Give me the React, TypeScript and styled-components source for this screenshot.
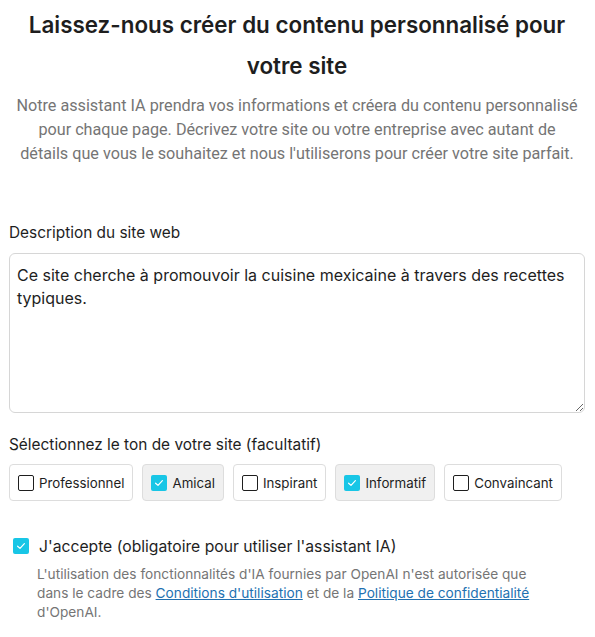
import React from "react";
import styled, { createGlobalStyle } from "styled-components";

const Global = createGlobalStyle`
  html, body { margin: 0; padding: 0; background: #fff; }
  body { font-family: Inter, "Noto Sans", sans-serif; color: #1e1e1e; }
  * { box-sizing: border-box; }
`;

const Page = styled.div`
  padding: 0 10px 0 9px;
  display: flex;
  flex-direction: column;
`;

const Title = styled.h1`
  margin: 4px 0 0;
  text-align: center;
  font-family: Inter, sans-serif;
  font-weight: 600;
  font-size: 22.4px;
  line-height: 41px;
  color: #1e1e1e;
`;

const Intro = styled.p`
  margin: 8px 0 0;
  padding: 0 6px;
  text-align: center;
  font-family: Roboto, sans-serif;
  font-size: 16.2px;
  line-height: 24px;
  color: #757575;
`;

const FieldLabel = styled.label<{ $top: number }>`
  display: block;
  font-family: Inter, sans-serif;
  font-size: 15.4px;
  line-height: 20px;
  color: #1e1e1e;
  margin-top: ${(p) => p.$top}px;
`;

const TextArea = styled.textarea`
  display: block;
  width: 100%;
  height: 160px;
  margin-top: 10px;
  padding: 10px 7px;
  border: 1px solid #d6d6d6;
  border-radius: 6px;
  font-family: Inter, sans-serif;
  font-size: 16px;
  line-height: 23px;
  color: #1e1e1e;
  resize: vertical;
  outline: none;
`;

const Chips = styled.div`
  display: flex;
  gap: 9px;
  margin-top: 9px;
`;

const Chip = styled.label<{ $on: boolean }>`
  display: flex;
  align-items: center;
  gap: 5px;
  height: 37px;
  padding: 0 8px;
  border: 1px solid #dddddd;
  border-radius: 4px;
  background: ${(p) => (p.$on ? "#f0f0f0" : "#fff")};
  font-family: Inter, sans-serif;
  font-size: 13.3px;
  color: #1e1e1e;
`;

const Box = styled.span<{ $on: boolean }>`
  width: 16px;
  height: 16px;
  flex: none;
  border-radius: 2px;
  border: ${(p) => (p.$on ? "none" : "1.5px solid #1e1e1e")};
  background: ${(p) => (p.$on ? "#18c6e6" : "#fff")};
  display: flex;
  align-items: center;
  justify-content: center;
`;

const Agree = styled.div`
  margin-top: 37px;
  display: grid;
  grid-template-columns: 16px 1fr;
  column-gap: 10px;
  padding-left: 4px;
`;

const AgreeLabel = styled.div`
  font-family: Inter, sans-serif;
  font-size: 15.7px;
  line-height: 18px;
  color: #1e1e1e;
  display: flex;
  align-items: center;
`;

const Help = styled.p`
  grid-column: 2;
  max-width: 515px;
  margin: 9px 0 0 -2px;
  font-family: Inter, sans-serif;
  font-size: 13.7px;
  line-height: 19px;
  color: #757575;
`;

const Link = styled.a`
  color: #2271b1;
  text-decoration: underline;
`;

const Check = ({ on }: { on: boolean }) => (
  <Box $on={on}>
    {on && (
      <svg width="12" height="12" viewBox="0 0 12 12" fill="none">
        <path d="M2.6 6.2 L5 8.4 L9.4 3.6" stroke="#fff" strokeWidth="1.2" strokeLinecap="round" strokeLinejoin="round" />
      </svg>
    )}
  </Box>
);

const tones: [string, boolean][] = [
  ["Professionnel", false],
  ["Amical", true],
  ["Inspirant", false],
  ["Informatif", true],
  ["Convaincant", false],
];

export default function App() {
  return (
    <Page>
      <Global />
      <Title>
        Laissez-nous créer du contenu personnalisé pour
        <br />
        votre site
      </Title>
      <Intro>
        Notre assistant IA prendra vos informations et créera du contenu personnalisé pour chaque page.
        Décrivez votre site ou votre entreprise avec autant de détails que vous le souhaitez et nous
        l'utiliserons pour créer votre site parfait.
      </Intro>
      <FieldLabel $top={57}>Description du site web</FieldLabel>
      <TextArea defaultValue="Ce site cherche à promouvoir la cuisine mexicaine à travers des recettes typiques." />
      <FieldLabel $top={22}>Sélectionnez le ton de votre site (facultatif)</FieldLabel>
      <Chips>
        {tones.map(([t, on]) => (
          <Chip key={t} $on={on}>
            <Check on={on} />
            {t}
          </Chip>
        ))}
      </Chips>
      <Agree>
        <Check on={true} />
        <AgreeLabel>J'accepte (obligatoire pour utiliser l'assistant IA)</AgreeLabel>
        <Help>
          L'utilisation des fonctionnalités d'IA fournies par OpenAI n'est autorisée que dans le cadre des{" "}
          <Link href="#">Conditions d'utilisation</Link> et de la{" "}
          <Link href="#">Politique de confidentialité</Link> d'OpenAI.
        </Help>
      </Agree>
    </Page>
  );
}
